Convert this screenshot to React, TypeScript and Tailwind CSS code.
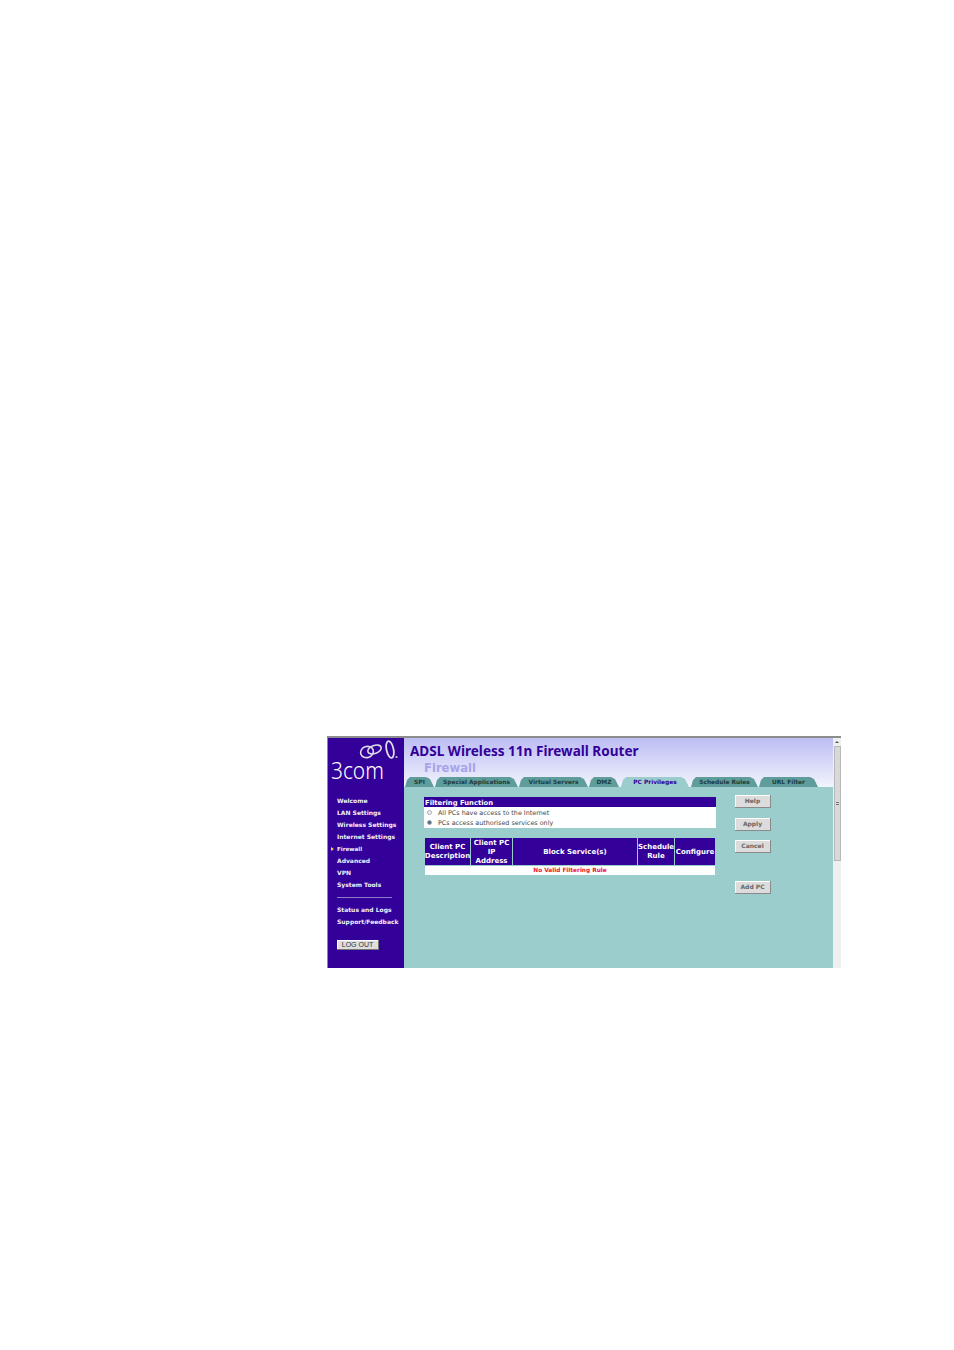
import React from 'react';

const navTop = ['Welcome', 'LAN Settings', 'Wireless Settings', 'Internet Settings', 'Firewall', 'Advanced', 'VPN', 'System Tools'];
const navBottom = ['Status and Logs', 'Support/Feedback'];

const tabs = [
  { label: 'SPI', w: 'w-[29px]', ml: 'ml-[1px]' },
  { label: 'Special Applications', w: 'w-[83px]', ml: 'ml-[1px]' },
  { label: 'Virtual Servers', w: 'w-[69px]', ml: 'ml-[1px]' },
  { label: 'DMZ', w: 'w-[30px]', ml: 'ml-[1px]' },
  { label: 'PC Privileges', w: 'w-[68px]', ml: 'ml-[2px]', active: true },
  { label: 'Schedule Rules', w: 'w-[67px]', ml: 'ml-[2px]' },
  { label: 'URL Filter', w: 'w-[59px]', ml: 'ml-[1px]' },
];

function Logo() {
  return (
    <svg viewBox="0 0 40 20" className="w-[40px] h-[20px] ml-[31px]">
      <g fill="none" stroke="#dcdce8">
        <ellipse cx="8" cy="12" rx="6.5" ry="5.5" strokeWidth="1.6" transform="rotate(-20 8 12)" />
        <ellipse cx="15.5" cy="9.5" rx="7" ry="4" strokeWidth="1.6" transform="rotate(-20 15.5 9.5)" />
        <ellipse cx="31" cy="9.5" rx="3.5" ry="8.5" strokeWidth="1.8" transform="rotate(-12 31 9.5)" />
      </g>
      <circle cx="37.5" cy="17" r="1.1" fill="#c8c8e0" />
    </svg>
  );
}

function SideButton({ label }: { label: string }) {
  return (
    <div className="w-[36px] h-[13px] bg-[#dcdcdc] border-r border-b border-[#8a8a8a] shadow-[inset_1px_1px_0_#fff] flex items-center justify-center text-[6px] font-bold text-[#666] leading-none">
      {label}
    </div>
  );
}

export default function App() {
  return (
    <div className="min-h-[1350px] bg-white pt-[736px] pl-[327px] font-['DejaVu_Sans',sans-serif]">
      <div className="w-[514px] h-[232px] flex border-t-2 border-l border-[#8c8c8c]">
        <aside className="w-[76px] shrink-0 bg-[#330099] text-[#f0f0f8] flex flex-col">
          <div className="pt-[2px] h-[57px]">
            <Logo />
            <div className="ml-[3px] -mt-[1px] text-[24px] leading-[22px] font-light font-['Noto_Sans',sans-serif] text-white scale-x-[0.87] origin-left">
              3com
            </div>
          </div>
          <nav className="flex flex-col">
            {navTop.map((item) => (
              <div key={item} className="relative h-[12px] pl-[9px] flex items-center text-[6px] font-bold leading-none whitespace-nowrap">
                {item === 'Firewall' && (
                  <span className="absolute left-[3px] top-[3.5px] border-l-[3px] border-y-[2.5px] border-y-transparent border-l-[#ffcc33]" />
                )}
                <span className={item === 'Firewall' ? 'text-[5.6px] pt-[1px]' : ''}>{item}</span>
              </div>
            ))}
          </nav>
          <div className="ml-[9px] mt-[6px] mb-[6px] w-[55px] h-px bg-[#8d7cc8]" />
          <div className="flex flex-col">
            {navBottom.map((item) => (
              <div key={item} className="h-[12px] pl-[9px] flex items-center text-[6px] font-bold leading-none whitespace-nowrap">
                {item}
              </div>
            ))}
          </div>
          <div className="ml-[9px] mt-[12px] w-[42px] h-[10px] bg-[#dedede] border-r border-b border-[#777] shadow-[inset_1px_1px_0_#fff] flex items-center justify-center text-[7px] text-[#333] font-['Liberation_Sans',sans-serif] leading-none">
            LOG OUT
          </div>
        </aside>

        <main className="flex-1 flex flex-col min-w-0">
          <header className="h-[49px] bg-gradient-to-b from-[#bdbdf4] to-[#f2f4fc] flex flex-col">
            <div className="h-[39px] pl-[6px] pt-[6px]">
              <div className="text-[13.55px] font-bold text-[#330099] leading-[15px] whitespace-nowrap font-['Noto_Sans',sans-serif]">ADSL Wireless 11n Firewall Router</div>
              <div className="ml-[14px] mt-[2px] text-[11.6px] font-bold text-[#a8a4ea] leading-[14px]">Firewall</div>
            </div>
            <div className="h-[10px] flex items-end">
              {tabs.map((tab) => (
                <div
                  key={tab.label}
                  className={`${tab.w} ${tab.ml} h-[10px] pt-[1px] flex items-center justify-center text-[5.9px] font-bold leading-none whitespace-nowrap [clip-path:polygon(0_100%,2px_3px,5px_0,calc(100%-8px)_0,calc(100%-4px)_2px,100%_100%)] ${
                    tab.active ? 'bg-[#9ccdcd] text-[#330099]' : 'bg-[#5f9c9c] text-[#1c3c3c]'
                  }`}
                >
                  {tab.label}
                </div>
              ))}
            </div>
          </header>

          <div className="flex-1 bg-[#9ccdcd] flex">
            <div className="ml-[20px] w-[292px] pt-[10px]">
              <div className="h-[10px] pt-[1px] bg-[#330099] text-white text-[6.8px] font-bold leading-[10px] pl-px">Filtering Function</div>
              <div className="h-[21px] bg-white flex flex-col justify-center text-[6.4px] text-[#444] leading-[10px] opacity-[0.99] will-change-[opacity]">
                <div className="flex items-center">
                  <span className="ml-[3px] mr-[6px] w-[5px] h-[5px] rounded-full border border-[#aab] bg-[#eee]" />
                  All PCs have access to the Internet
                </div>
                <div className="flex items-center">
                  <span className="ml-[3px] mr-[6px] w-[5px] h-[5px] rounded-full border border-[#aab] bg-[#4a6a7a]" />
                  PCs access authorised services only
                </div>
              </div>

              <div className="mt-[10px] ml-px w-[290px]">
                <div className="h-[27px] flex gap-px text-white text-[7px] font-bold leading-[9px] text-center">
                  <div className="w-[45px] pt-[1px] bg-[#330099] flex items-center justify-center">Client PC<br />Description</div>
                  <div className="w-[41px] pt-[1px] bg-[#330099] flex items-center justify-center">Client PC<br />IP<br />Address</div>
                  <div className="w-[124px] pt-[1px] bg-[#330099] flex items-center justify-center">Block Service(s)</div>
                  <div className="w-[36px] pt-[1px] bg-[#330099] flex items-center justify-center">Schedule<br />Rule</div>
                  <div className="flex-1 pt-[1px] bg-[#330099] flex items-center justify-center">Configure</div>
                </div>
                <div className="mt-px h-[9px] bg-white text-[#ee1133] text-[5.8px] font-bold leading-[9px] text-center">No Valid Filtering Rule</div>
              </div>
            </div>

            <div className="ml-[19px] pt-[8px] flex flex-col">
              <SideButton label="Help" />
              <div className="mt-[10px]"><SideButton label="Apply" /></div>
              <div className="mt-[9px]"><SideButton label="Cancel" /></div>
              <div className="mt-[28px]"><SideButton label="Add PC" /></div>
            </div>
          </div>
        </main>

        <div className="w-[8px] shrink-0 bg-[#eef0f0] flex flex-col items-center">
          <div className="h-[8px] flex items-center justify-center">
            <span className="border-x-[2px] border-b-[2px] border-x-transparent border-b-[#555]" />
          </div>
          <div className="w-[7px] h-[115px] bg-[#d8d8d8] border border-[#b8b8b8] flex items-center justify-center">
            <span className="w-[3px] h-[3px] border-y border-[#777]" />
          </div>
        </div>
      </div>
    </div>
  );
}
